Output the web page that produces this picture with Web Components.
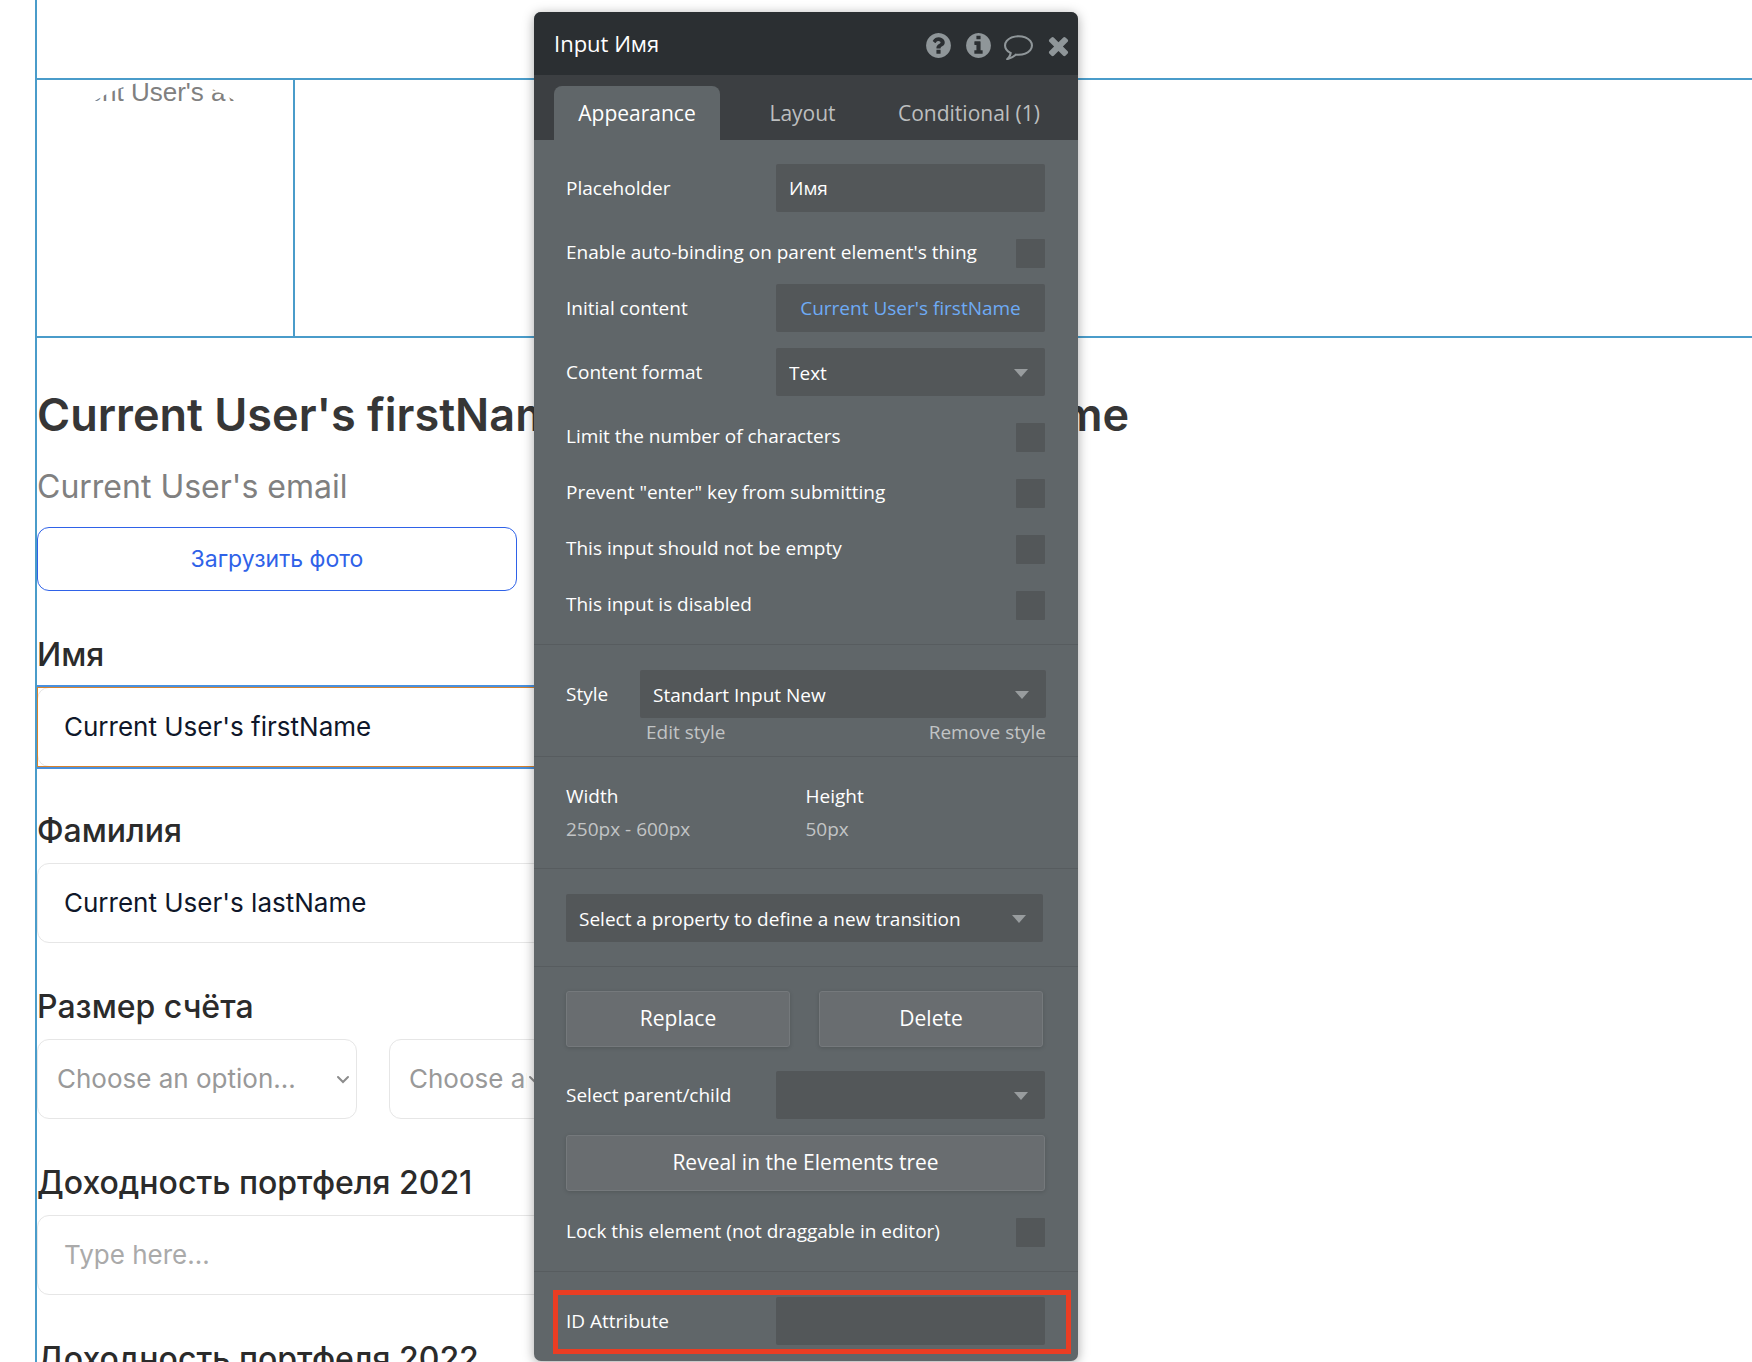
<!DOCTYPE html>
<html lang="ru">
<head>
<meta charset="utf-8">
<title>Input Имя</title>
<style>
  body {
    margin: 0;
    overflow: hidden;
    background: #fff;
  }

  property-panel {
    position: absolute;
    left: 534px;
    top: 12px;
  }
</style>
</head>
<body>
<editor-canvas>
  <canvas-avatar slot="avatar">Current User's avatar</canvas-avatar>
  <span slot="name">Current User's firstName Current User's lastName</span>
  <span slot="email">Current User's email</span>
  <canvas-button>Загрузить фото</canvas-button>
  <canvas-input label="Имя" value="Current User's firstName" selected></canvas-input>
  <canvas-input label="Фамилия" value="Current User's lastName"></canvas-input>
  <canvas-choice label="Размер счёта" placeholder="Choose an option..."></canvas-choice>
  <canvas-input label="Доходность портфеля 2021" placeholder="Type here..."></canvas-input>
  <canvas-input label="Доходность портфеля 2022" placeholder="Type here..."></canvas-input>
</editor-canvas>

<property-panel>
  <span slot="title">Input Имя</span>
  <panel-section>
    <property-text label="Placeholder" value="Имя"></property-text>
    <property-check label="Enable auto-binding on parent element's thing"></property-check>
    <property-expression label="Initial content">Current User's firstName</property-expression>
    <property-select label="Content format" value="Text"></property-select>
    <property-check label="Limit the number of characters"></property-check>
    <property-check label='Prevent "enter" key from submitting'></property-check>
    <property-check label="This input should not be empty"></property-check>
    <property-check label="This input is disabled"></property-check>
  </panel-section>
  <panel-section class="style">
    <property-style label="Style" value="Standart Input New"></property-style>
  </panel-section>
  <panel-section class="size">
    <property-size></property-size>
  </panel-section>
  <panel-section class="transition">
    <property-select hint="Transition" value="Select a property to define a new transition"></property-select>
  </panel-section>
  <panel-section class="actions">
    <button-pair>
      <panel-button>Replace</panel-button>
      <panel-button>Delete</panel-button>
    </button-pair>
    <property-select label="Select parent/child" value=""></property-select>
    <panel-button>Reveal in the Elements tree</panel-button>
    <property-check label="Lock this element (not draggable in editor)"></property-check>
  </panel-section>
  <panel-section class="last">
    <property-text label="ID Attribute" value="" highlighted></property-text>
  </panel-section>
</property-panel>

<script>
  const attr = (el, name) => (el.getAttribute(name) || '').replace(/"/g, '&quot;');

  /* ---------- canvas ---------- */

  class EditorCanvas extends HTMLElement {
    constructor() {
      super();
      this.attachShadow({ mode: 'open' }).innerHTML = `
        <style>
          :host {
            --guide: #4a9cca;
            display: block;
            height: 100vh;
            padding-left: 35px;
            overflow: hidden;
            box-sizing: border-box;
            font-family: Inter, "Liberation Sans", sans-serif;
          }

          .page {
            min-height: 100%;
            border-left: 2px solid var(--guide);
          }

          .top {
            height: 78px;
          }

          .group {
            display: flex;
            border-top: 2px solid var(--guide);
            border-bottom: 2px solid var(--guide);
          }

          h1 {
            margin: 49px 0 24px;
            font-size: 45px;
            line-height: 56px;
            font-weight: 600;
            color: #363636;
            white-space: nowrap;
          }

          p {
            margin: 0 0 20px;
            font-size: 32px;
            line-height: 40px;
            color: #808080;
          }
        </style>
        <div class="page">
          <div class="top"></div>
          <div class="group"><slot name="avatar"></slot></div>
          <h1><slot name="name"></slot></h1>
          <p><slot name="email"></slot></p>
          <slot></slot>
        </div>
      `;
    }
  }
  customElements.define('editor-canvas', EditorCanvas);

  class CanvasAvatar extends HTMLElement {
    constructor() {
      super();
      this.attachShadow({ mode: 'open' }).innerHTML = `
        <style>
          :host {
            display: block;
            width: 256px;
            height: 256px;
            border-right: 2px solid var(--guide);
            font-family: "Liberation Sans", Arial, sans-serif;
            font-size: 26px;
            line-height: 24px;
            color: #808080;
          }

          .circle {
            height: 100%;
            border-radius: 50%;
            overflow: hidden;
          }

          .alt {
            height: 22px;
            overflow: hidden;
            white-space: nowrap;
          }
        </style>
        <div class="circle"><div class="alt"><slot></slot></div></div>
      `;
    }
  }
  customElements.define('canvas-avatar', CanvasAvatar);

  class CanvasButton extends HTMLElement {
    constructor() {
      super();
      this.attachShadow({ mode: 'open' }).innerHTML = `
        <style>
          :host {
            display: block;
          }

          button {
            display: block;
            width: 480px;
            height: 64px;
            border: 1px solid #2f62e8;
            border-radius: 12px;
            background: #fff;
            color: #2f62e8;
            font: 23px Inter, sans-serif;
          }
        </style>
        <button type="button"><slot></slot></button>
      `;
    }
  }
  customElements.define('canvas-button', CanvasButton);

  const fieldStyle = `
    :host {
      display: block;
      padding-top: 45px;
      max-width: 960px;
    }

    label {
      display: block;
      margin-bottom: 13px;
      font-size: 32px;
      line-height: 38px;
      font-weight: 500;
      color: #2b2b2b;
    }

    input, select {
      display: block;
      width: 100%;
      height: 80px;
      box-sizing: border-box;
      border: 1px solid #e6e6e6;
      border-radius: 12px;
      background: #fff;
      font: 26px Inter, sans-serif;
      outline: 0;
    }
  `;

  class CanvasInput extends HTMLElement {
    connectedCallback() {
      this.attachShadow({ mode: 'open' }).innerHTML = `
        <style>
          ${fieldStyle}

          input {
            padding: 0 26px 2px;
            color: #0f172a;
          }

          input::placeholder {
            color: #aaa;
          }

          .box {
            height: 80px;
          }

          :host([selected]) .box {
            outline: 1px solid #d9822b;
            outline-offset: -1px;
            box-shadow: 0 -2px #4a90dc, 0 2px #4a90dc;
          }
        </style>
        <label for="field">${attr(this, 'label')}</label>
        <div class="box">
          <input id="field" type="text" value="${attr(this, 'value')}" placeholder="${attr(this, 'placeholder')}">
        </div>
      `;
    }
  }
  customElements.define('canvas-input', CanvasInput);

  class CanvasChoice extends HTMLElement {
    connectedCallback() {
      const chevron = `
        <svg width="14" height="10" viewBox="0 0 14 10" fill="none" stroke="#8c8c8c" stroke-width="2" stroke-linecap="round">
          <path d="M2 2l5 5 5-5"/>
        </svg>`;
      const option = `<option>${attr(this, 'placeholder')}</option>`;
      this.attachShadow({ mode: 'open' }).innerHTML = `
        <style>
          ${fieldStyle}

          .row {
            display: flex;
            gap: 32px;
          }

          .choice {
            display: grid;
            width: 320px;
          }

          .choice.narrow {
            width: 160px;
          }

          select, svg {
            grid-area: 1 / 1;
          }

          select {
            appearance: none;
            padding: 0 21px 2px 19px;
            color: #999;
          }

          svg {
            place-self: center end;
            margin-right: 7px;
            margin-top: 2px;
            pointer-events: none;
          }
        </style>
        <label for="from">${attr(this, 'label')}</label>
        <div class="row">
          <div class="choice"><select id="from">${option}</select>${chevron}</div>
          <div class="choice narrow"><select aria-label="Валюта">${option}</select>${chevron}</div>
        </div>
      `;
    }
  }
  customElements.define('canvas-choice', CanvasChoice);

  /* ---------- property panel ---------- */

  class PropertyPanel extends HTMLElement {
    constructor() {
      super();
      this.attachShadow({ mode: 'open' }).innerHTML = `
        <style>
          :host {
            display: block;
            width: 544px;
            border-radius: 7px;
            overflow: hidden;
            background: #606669;
            box-shadow: 0 2px 12px rgba(0, 0, 0, 0.35);
            color: #fff;
            font-family: "Open Sans", "Noto Sans", sans-serif;
            font-size: 19px;
          }

          header {
            display: flex;
            justify-content: space-between;
            height: 63px;
            padding: 0 5px 0 20px;
            background: #2b2f32;
          }

          h2 {
            margin: 0;
            font-size: 22px;
            line-height: 63px;
            font-weight: 400;
          }

          .icons {
            display: flex;
            align-items: center;
            gap: 11px;
            padding-top: 4px;
          }

          .icons button {
            padding: 0;
            border: 0;
            background: none;
            color: #8f9699;
            line-height: 0;
          }

          svg {
            width: 29px;
            height: 29px;
            fill: currentColor;
          }

          nav {
            display: flex;
            align-items: flex-end;
            height: 65px;
            padding-left: 20px;
            background: #3c3f42;
          }

          nav button {
            flex: 1;
            height: 54px;
            padding: 0;
            border: 0;
            border-radius: 8px 8px 0 0;
            background: none;
            color: #bcbebf;
            font: inherit;
            font-size: 21px;
          }

          nav button.active {
            flex: 0 0 166px;
            background: #606669;
            color: #fff;
          }

          nav button:last-child {
            flex: 0 0 168px;
            margin-right: 25px;
          }
        </style>
        <header>
          <h2><slot name="title"></slot></h2>
          <div class="icons">
            <button type="button" aria-label="Help"><svg viewBox="0 0 1792 1792"><path d="M1024 1376v-192q0-14-9-23t-23-9h-192q-14 0-23 9t-9 23v192q0 14 9 23t23 9h192q14 0 23-9t9-23zm256-672q0-88-55.5-163t-138.5-116-170-41q-243 0-371 213-15 24 8 42l132 100q7 6 19 6 16 0 25-12 53-68 86-92 34-24 86-24 48 0 85.5 26t37.5 59q0 38-20 61t-68 45q-63 28-115.5 86.5t-52.5 125.5v36q0 14 9 23t23 9h192q14 0 23-9t9-23q0-19 21.5-49.5t54.5-49.5q32-18 49-28.5t46-35 44.5-48 28-60.5 12.5-81zm384 192q0 209-103 385.5t-279.5 279.5-385.5 103-385.5-103-279.5-279.5-103-385.5 103-385.5 279.5-279.5 385.5-103 385.5 103 279.5 279.5 103 385.5z"/></svg></button>
            <button type="button" aria-label="Info"><svg viewBox="0 0 1792 1792"><path d="M1152 1376v-160q0-14-9-23t-23-9h-96v-512q0-14-9-23t-23-9h-320q-14 0-23 9t-9 23v160q0 14 9 23t23 9h96v320h-96q-14 0-23 9t-9 23v160q0 14 9 23t23 9h448q14 0 23-9t9-23zm-128-896v-160q0-14-9-23t-23-9h-192q-14 0-23 9t-9 23v160q0 14 9 23t23 9h192q14 0 23-9t9-23zm640 416q0 209-103 385.5t-279.5 279.5-385.5 103-385.5-103-279.5-279.5-103-385.5 103-385.5 279.5-279.5 385.5-103 385.5 103 279.5 279.5 103 385.5z"/></svg></button>
            <button type="button" aria-label="Comment"><svg viewBox="0 0 1792 1792"><path d="M896 384q-204 0-381.5 69.5t-282 187.5-104.5 255q0 112 71.5 213.5t201.5 175.5l87 50-27 96q-24 91-70 172 152-63 275-171l43-38 57 6q69 8 130 8 204 0 381.5-69.5t282-187.5 104.5-255-104.5-255-282-187.5-381.5-69.5zm896 512q0 174-120 321.5t-326 233-450 85.5q-70 0-145-8-198 175-460 242-49 14-114 22h-5q-15 0-27-10.5t-16-27.5v-1q-3-4-.5-12t2-10 4.5-9.5l6-9 7-8.5 8-9q7-8 31-34.5t34.5-38 31-39.5 32.5-51 27-59 26-76q-157-89-247.5-220t-90.5-281q0-174 120-321.5t326-233 450-85.5 450 85.5 326 233 120 321.5z"/></svg></button>
            <button type="button" aria-label="Close"><svg viewBox="0 0 1792 1792"><path d="M1490 1322q0 40-28 68l-136 136q-28 28-68 28t-68-28l-294-294-294 294q-28 28-68 28t-68-28l-136-136q-28-28-28-68t28-68l294-294-294-294q-28-28-28-68t28-68l136-136q28-28 68-28t68 28l294 294 294-294q28-28 68-28t68 28l136 136q28 28 28 68t-28 68l-294 294 294 294q28 28 28 68z"/></svg></button>
          </div>
        </header>
        <nav>
          <button type="button" class="active">Appearance</button>
          <button type="button">Layout</button>
          <button type="button">Conditional (1)</button>
        </nav>
        <slot></slot>
      `;
    }
  }
  customElements.define('property-panel', PropertyPanel);

  class PanelSection extends HTMLElement {
    constructor() {
      super();
      this.attachShadow({ mode: 'open' }).innerHTML = `
        <style>
          :host {
            display: flex;
            flex-direction: column;
            gap: 16px;
            padding: 25px 33px 24px 32px;
            border-top: 1px solid #575c5f;
          }

          :host(:first-of-type) {
            padding-top: 24px;
            border-top: 0;
          }

          :host(.style) {
            padding-right: 32px;
            padding-bottom: 10px;
          }

          :host(.transition) {
            padding-right: 35px;
          }

          :host(.actions) {
            padding-top: 24px;
          }

          :host(.last) {
            padding-bottom: 16px;
          }
        </style>
        <slot></slot>
      `;
    }
  }
  customElements.define('panel-section', PanelSection);

  const rowStyle = `
    :host {
      display: flex;
      align-items: flex-start;
    }

    label {
      flex: 0 0 210px;
      line-height: 48px;
      white-space: nowrap;
    }

    .box {
      flex: 1;
      min-width: 0;
      width: 100%;
      height: 48px;
      box-sizing: border-box;
      margin: 0;
      padding: 0 13px;
      border: 0;
      border-radius: 2px;
      background: #535759;
      color: #fff;
      font: inherit;
      outline: 0;
    }

    .dropdown {
      flex: 1;
      display: grid;
      min-width: 0;
    }

    .dropdown > * {
      grid-area: 1 / 1;
    }

    select.box {
      appearance: none;
      padding-top: 2px;
    }

    .caret {
      place-self: center end;
      margin-top: 2px;
      margin-right: 17px;
      border: 7px solid transparent;
      border-top: 8px solid #989c9e;
      border-bottom: 0;
      pointer-events: none;
    }
  `;

  class PropertyText extends HTMLElement {
    connectedCallback() {
      this.attachShadow({ mode: 'open' }).innerHTML = `
        <style>
          ${rowStyle}

          :host([highlighted]) {
            position: relative;
          }

          :host([highlighted])::after {
            content: "";
            position: absolute;
            inset: -7px -26px -9px -13px;
            border: 5px solid #ea3d23;
            pointer-events: none;
          }
        </style>
        <label for="value">${attr(this, 'label')}</label>
        <input class="box" id="value" type="text" value="${attr(this, 'value')}">
      `;
    }
  }
  customElements.define('property-text', PropertyText);

  class PropertyExpression extends HTMLElement {
    connectedCallback() {
      this.attachShadow({ mode: 'open' }).innerHTML = `
        <style>
          ${rowStyle}

          button.box {
            padding: 0;
            color: #6eabf5;
          }
        </style>
        <label for="value">${attr(this, 'label')}</label>
        <button class="box" id="value" type="button"><slot></slot></button>
      `;
    }
  }
  customElements.define('property-expression', PropertyExpression);

  class PropertySelect extends HTMLElement {
    connectedCallback() {
      const label = attr(this, 'label');
      this.attachShadow({ mode: 'open' }).innerHTML = `
        <style>${rowStyle}</style>
        ${label ? `<label for="value">${label}</label>` : ''}
        <div class="dropdown">
          <select class="box" id="value" aria-label="${label || attr(this, 'hint')}">
            <option>${attr(this, 'value')}</option>
          </select>
          <span class="caret"></span>
        </div>
      `;
    }
  }
  customElements.define('property-select', PropertySelect);

  class PropertyCheck extends HTMLElement {
    connectedCallback() {
      this.attachShadow({ mode: 'open' }).innerHTML = `
        <style>
          ${rowStyle}

          :host {
            height: 40px;
            justify-content: space-between;
          }

          label {
            flex: none;
          }

          input {
            appearance: none;
            align-self: flex-end;
            width: 29px;
            height: 29px;
            margin: 0;
            border-radius: 1px;
            background: #535759;
          }
        </style>
        <label for="value">${attr(this, 'label')}</label>
        <input id="value" type="checkbox">
      `;
    }
  }
  customElements.define('property-check', PropertyCheck);

  class PropertyStyle extends HTMLElement {
    connectedCallback() {
      this.attachShadow({ mode: 'open' }).innerHTML = `
        <style>
          ${rowStyle}

          label {
            flex-basis: 74px;
          }

          .column {
            flex: 1;
          }

          .links {
            display: flex;
            justify-content: space-between;
            padding-left: 6px;
            line-height: 28px;
          }

          a {
            color: #c2c4c5;
            text-decoration: none;
          }
        </style>
        <label for="value">${attr(this, 'label')}</label>
        <div class="column">
          <div class="dropdown">
            <select class="box" id="value"><option>${attr(this, 'value')}</option></select>
            <span class="caret"></span>
          </div>
          <div class="links">
            <a href="#">Edit style</a>
            <a href="#">Remove style</a>
          </div>
        </div>
      `;
    }
  }
  customElements.define('property-style', PropertyStyle);

  class PropertySize extends HTMLElement {
    constructor() {
      super();
      this.attachShadow({ mode: 'open' }).innerHTML = `
        <style>
          :host {
            display: block;
          }

          dl {
            display: grid;
            grid-template-columns: 1fr 1fr;
            grid-auto-flow: column;
            grid-template-rows: 30px 32px;
            line-height: 28px;
            margin: 0;
          }

          dd {
            margin: 0;
            line-height: 34px;
            color: #c2c4c5;
          }
        </style>
        <dl>
          <dt>Width</dt>
          <dd>250px - 600px</dd>
          <dt>Height</dt>
          <dd>50px</dd>
        </dl>
      `;
    }
  }
  customElements.define('property-size', PropertySize);

  class ButtonPair extends HTMLElement {
    constructor() {
      super();
      this.attachShadow({ mode: 'open' }).innerHTML = `
        <style>
          :host {
            display: grid;
            grid-template-columns: 1fr 1fr;
            gap: 29px;
            padding: 0 2px 8px 0;
          }
        </style>
        <slot></slot>
      `;
    }
  }
  customElements.define('button-pair', ButtonPair);

  class PanelButton extends HTMLElement {
    constructor() {
      super();
      this.attachShadow({ mode: 'open' }).innerHTML = `
        <style>
          :host {
            display: block;
          }

          button {
            display: block;
            width: 100%;
            height: 56px;
            padding-bottom: 3px;
            border: 1px solid #75797c;
            border-radius: 3px;
            background: #696d70;
            box-shadow: 0 1px 4px rgba(0, 0, 0, 0.15);
            color: #fff;
            font: inherit;
            font-size: 21px;
          }
        </style>
        <button type="button"><slot></slot></button>
      `;
    }
  }
  customElements.define('panel-button', PanelButton);
</script>
</body>
</html>
